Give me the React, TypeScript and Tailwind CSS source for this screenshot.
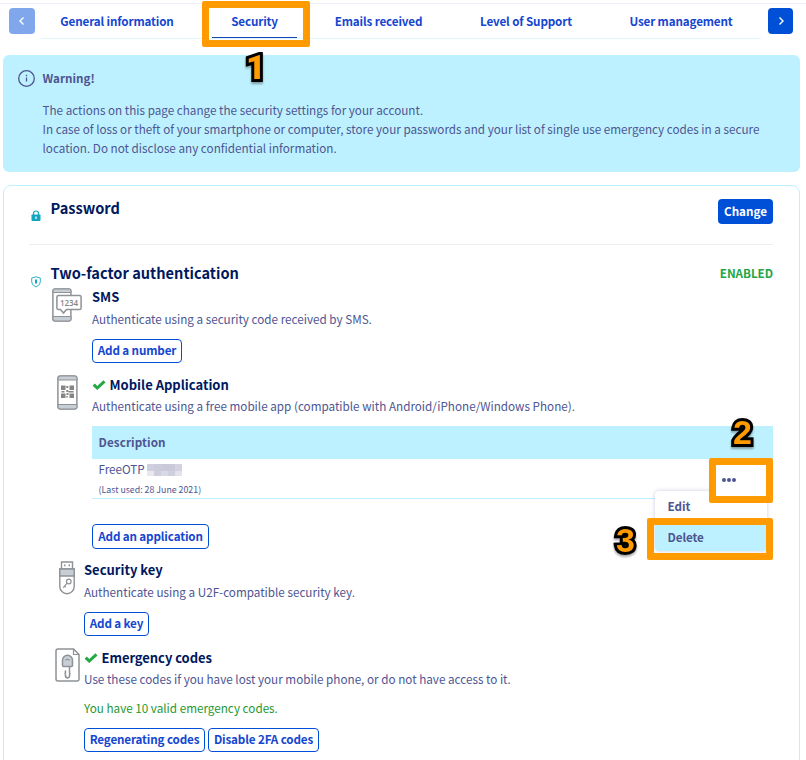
import type { ReactNode } from "react";

function OutlineButton({ className, children }: { className: string; children: ReactNode }) {
  return (
    <button
      className={`flex shrink-0 items-center justify-center whitespace-nowrap rounded-[4px] border border-[#0050d7] bg-white pb-[2px] text-[11.67px] font-bold tracking-[-0.14px] text-[#1546d0] ${className}`}
    >
      {children}
    </button>
  );
}

function Check() {
  return (
    <svg width="14" height="10" viewBox="0 0 14 10" className="shrink-0">
      <path d="M1.7 4.700 5.200 8 12.500 1.300" fill="none" stroke="#22a845" strokeWidth="3" />
    </svg>
  );
}

function SmsIcon() {
  return (
    <svg width="30" height="34" viewBox="0 0 30 34" fill="none" stroke="#8e9296" strokeWidth="1.5">
      <rect x="0.9" y="0.9" width="18" height="32" rx="2" fill="#fff" />
      <path d="M1 4.5V3q0-2 2-2h14q2 0 2 2v1.500ZM1 28.500h18V31q0 2-2 2H3q-2 0-2-2Z" fill="#c8ced5" strokeWidth="1" />
      <path d="M6.500 7.500h21q1.600 0 1.600 1.600v10.800q0 1.600-1.600 1.600H14.500L11.500 25l-3-3.500h-2q-1.600 0-1.600-1.600V9.100q0-1.600 1.600-1.600Z" fill="#fff" />
      <text x="17" y="17.500" textAnchor="middle" fill="#858585" stroke="none" fontSize="8" fontWeight="600" fontFamily="Open Sans, sans-serif" textLength="18">
        1234
      </text>
    </svg>
  );
}

function AppIcon() {
  return (
    <svg width="21" height="35" viewBox="0 0 21 35" fill="none" stroke="#8e9296" strokeWidth="1.5">
      <rect x="0.900" y="0.900" width="19" height="33" rx="2.500" fill="#fff" />
      <path d="M1 5V3.500Q1 1 3.500 1h14Q20 1 20 3.500V5ZM1 29.500h19v2q0 2.500-2.500 2.500h-14Q1 34 1 31.500Z" fill="#c8ced5" strokeWidth="1" />
      <path d="M4 10.500h4.500v4.500H4zM12.500 10.500H17v4.500h-4.500zM4 18.500h4.500V23H4zM12.500 18.500H17V23h-4.500zM9.300 11h2v2h-2zM9.300 15h2v2h-2zM11.500 16h5v1.500h-5zM4.500 16h3v1.500h-3zM9.500 18h2v2h-2zM9.300 21h1.500v1.500H9.300z" fill="#858585" stroke="none" />
    </svg>
  );
}

function UsbIcon() {
  return (
    <svg width="16" height="34" viewBox="0 0 16 34" fill="none" stroke="#8e9296" strokeWidth="1.400">
      <path d="M2.500 8V1h11v7" fill="#fff" />
      <path d="M5 4.300h1.500M9.500 4.300H11" strokeWidth="1.800" />
      <path d="M.8 8h14.400v17.500a7.200 7.200 0 0 1-14.400 0Z" fill="#fff" />
      <path d="M.8 8h14.400v7H.8Z" fill="#c8ced5" />
      <circle cx="9.800" cy="20.500" r="2.300" strokeWidth="1.200" />
      <path d="m8.200 22.200-4 4.400M5.500 25l1.300 1.200" strokeWidth="1.200" />
    </svg>
  );
}

function CodesIcon() {
  return (
    <svg width="25" height="34" viewBox="0 0 25 34" fill="none" stroke="#8e9296" strokeWidth="1.500">
      <path d="M3 .9h15.500L24 6.500V31q0 2-2 2H3q-2 0-2-2V3Q1 .9 3 .9Z" fill="#fff" />
      <path d="M18.500 1v5.500H24" strokeWidth="1.200" />
      <path d="M7.500 17.500v-5.200a5 5 0 0 1 10 0v5.200q0 1-1 1h-8q-1 0-1-1Z" fill="#c8ced5" />
      <path d="M10.500 12.500q2-2.500 4 0" strokeWidth="1.200" />
      <path d="M14.500 19v3.500M11 22.500q-1.200 1-.5 2-1 1 0 2-.5 3 2 3.500 2.500-.5 2-3 1-1.200 0-2.200.7-1.300-.5-2.300" />
    </svg>
  );
}

function StepNumber({ className, children }: { className: string; children: ReactNode }) {
  return (
    <span
      className={`absolute leading-[34px] text-[#ff9a00] drop-shadow-[0_2px_1px_rgba(0,0,0,0.35)] [-webkit-text-stroke:6px_#000] [paint-order:stroke_fill] [stroke-linejoin:round] ${className}`}
    >
      {children}
    </span>
  );
}

const frame = "absolute border-[7px] border-[#ff9a00] rounded-[2px]";
const heading = "flex items-center whitespace-nowrap text-[13px] font-bold text-[#00185e]";
const body = "flex items-center whitespace-nowrap text-[11.7px] text-[#4d5592]";

export default function App() {
  return (
    <div className="relative flex h-[760px] w-[806px] flex-col overflow-hidden bg-white pt-[3px] font-['Noto_Sans_CJK_SC',sans-serif]">
      <nav className="flex h-[52px] shrink-0 items-start border-t border-[#f1f1fb] pl-[9px] pt-[4px]">
        <button className="flex h-[26px] w-[26px] items-center justify-center rounded-[4px] bg-[#80a7eb]">
          <svg width="8" height="10" viewBox="0 0 8 10"><path d="M5.500 1.500 2 5l3.500 3.500" fill="none" stroke="#fff" strokeWidth="1.400" /></svg>
        </button>
        <div className="ml-[6px] flex h-[31px] w-[720px] border-b border-[#dff6fb] text-[11.67px] font-bold tracking-[-0.14px] text-[#1546d0]">
          <div className="flex h-[27px] w-[152px] items-center justify-center whitespace-nowrap pb-[2px]">General information</div>
          <div className="ml-[19px] flex h-[30px] w-[85px] items-center justify-center border-b border-[#1546b0] pb-[4px]">Security</div>
          <div className="flex h-[27px] w-[163px] items-center justify-center whitespace-nowrap pb-[2px]">Emails received</div>
          <div className="flex h-[27px] w-[132px] items-center justify-center whitespace-nowrap pb-[2px]">Level of Support</div>
          <div className="ml-[24px] flex h-[27px] w-[130px] items-center justify-center whitespace-nowrap pb-[2px]">User management</div>
        </div>
        <button className="ml-[7px] flex h-[26px] w-[25px] items-center justify-center rounded-[4px] bg-[#0050d7]">
          <svg width="8" height="10" viewBox="0 0 8 10"><path d="M2.500 1.500 6 5 2.500 8.500" fill="none" stroke="#fff" strokeWidth="1.400" /></svg>
        </button>
      </nav>

      <section className="ml-[3px] h-[117px] w-[797px] shrink-0 rounded-[6px] bg-[#bef1ff] pl-[14px] pt-[14px] text-[#4d5592]">
        <div className="flex h-[18px] items-center">
          <svg width="18" height="18" viewBox="0 0 18 18" fill="none" stroke="#4d5592">
            <circle cx="9.500" cy="9.500" r="7.800" strokeWidth="1.300" />
            <path d="M9.500 8.500v4M9.500 5.800v1.400" strokeWidth="1.300" />
          </svg>
          <strong className="ml-[7.500px] text-[11.67px] leading-[18px]">Warning!</strong>
        </div>
        <p className="ml-[25.500px] mt-[13px] whitespace-nowrap text-[11.7px] leading-[19px]">
          The actions on this page change the security settings for your account.
          <br />
          In case of loss or theft of your smartphone or computer, store your passwords and your list of single use emergency codes in a secure
          <br />
          location. Do not disclose any confidential information.
        </p>
      </section>

      <main className="ml-[3px] mt-[13px] h-[600px] w-[797px] shrink-0 rounded-t-[8px] border border-[#bef1ff] pl-[25px]">
        <div className="flex h-[59px] w-[744px] items-start border-b border-[#ededed]">
          <svg width="10" height="12" viewBox="0 0 10 12" className="ml-[2px] mt-[24px]">
            <path d="M2.500 5V3.500a2.500 2.500 0 0 1 5 0V5" fill="none" stroke="#15a5be" strokeWidth="1.200" />
            <rect x="0.500" y="4.500" width="9" height="6.500" rx="0.800" fill="#15a5be" />
            <path d="M5 6.500v2.500" stroke="#d5f6fb" strokeWidth="1.500" />
          </svg>
          <h2 className="ml-[9.500px] mt-[12px] text-[14.600px] font-bold leading-[20px] text-[#00185e]">Password</h2>
          <button className="ml-auto mt-[13px] flex h-[25px] w-[55px] items-center justify-center rounded-[4px] bg-[#0050d7] pb-[1px] text-[11.67px] font-bold text-white">Change</button>
        </div>

        <div className="flex h-[43px] w-[744px] items-start">
          <svg width="10" height="12" viewBox="0 0 10 12" className="ml-[2px] mt-[31px] shrink-0" fill="none" stroke="#2cb4ca">
            <path d="M5 .8 9.300 2v4q0 3-4.300 5Q.7 9 .7 6V2Z" />
            <path d="M5 3.500v4" stroke="#15a5be" strokeWidth="2" />
          </svg>
          <h2 className="ml-[9.500px] mt-[18px] whitespace-nowrap text-[14.600px] font-bold leading-[20px] text-[#00185e]">Two-factor authentication</h2>
          <span className="ml-auto mt-[19px] text-[11.67px] font-bold leading-[18px] tracking-[-0.05px] text-[#23a647]">ENABLED</span>
        </div>

        <article className="flex h-[87px] w-[744px]">
          <div className="w-[63px] shrink-0 pl-[23px]"><SmsIcon /></div>
          <div>
            <h3 className={`${heading} mt-px h-[16px]`}>SMS</h3>
            <p className={`${body} mt-[5px] h-[18px]`}>Authenticate using a security code received by SMS.</p>
            <OutlineButton className="mt-[11px] h-[24px] w-[90px]">Add a number</OutlineButton>
          </div>
        </article>

        <article className="flex h-[186px] w-[744px]">
          <div className="w-[63px] shrink-0 pl-[27.500px]"><AppIcon /></div>
          <div className="w-[681px] shrink-0">
            <h3 className={`${heading} mt-px h-[18px] gap-[3.500px]`}><Check />Mobile Application</h3>
            <p className={`${body} mt-[3px] h-[18px]`}>Authenticate using a free mobile app (compatible with Android/iPhone/Windows Phone).</p>
            <div className="mt-[11px] h-[33px] bg-[#bef1ff] pl-[6.500px] text-[11.67px] font-bold leading-[31px] tracking-[0.1px] text-[#4d5592]">Description</div>
            <div className="h-[40px] border-b border-[#bef1ff] pl-[6.500px] text-[#4d5592]">
              <div className="flex h-[20px] items-center text-[11.67px]">
                FreeOTP
                <span className="ml-[2.500px] mt-px flex h-[12px] w-[35px] flex-col">
                  <span className="flex h-[7px]">
                    <span className="w-[7px] bg-[#d0cfdf]" />
                    <span className="w-[7px] bg-[#cdccdc]" />
                    <span className="w-[14px] bg-[#cac9da]" />
                    <span className="w-[7px] bg-[#d3d2e1]" />
                  </span>
                  <span className="flex h-[5px]">
                    <span className="w-[7px] bg-[#e8e8ef]" />
                    <span className="w-[7px] bg-[#cfcede]" />
                    <span className="w-[7px] bg-[#d9d8e5]" />
                    <span className="w-[7px] bg-[#d0cfdf]" />
                    <span className="w-[7px] bg-[#e3e3ed]" />
                  </span>
                </span>
              </div>
              <div className="flex h-[18px] items-center pt-[3px] text-[8.800px]">(Last used: 28 June 2021)</div>
            </div>
            <OutlineButton className="mt-[25px] h-[25px] w-[117px]">Add an application</OutlineButton>
          </div>
        </article>

        <article className="flex h-[87px] w-[744px]">
          <div className="w-[55px] shrink-0 pl-[30px]"><UsbIcon /></div>
          <div>
            <h3 className={`${heading} mt-px h-[16px]`}>Security key</h3>
            <p className={`${body} mt-[5px] h-[18px]`}>Authenticate using a U2F-compatible security key.</p>
            <OutlineButton className="mt-[11px] h-[24px] w-[65px]">Add a key</OutlineButton>
          </div>
        </article>

        <article className="flex w-[744px]">
          <div className="w-[55px] shrink-0 pl-[25.500px]"><CodesIcon /></div>
          <div>
            <h3 className={`${heading} mt-px h-[18px] gap-[3.500px] tracking-[-0.06px]`}><Check />Emergency codes</h3>
            <p className={`${body} mt-[3px] h-[18px]`}>Use these codes if you have lost your mobile phone, or do not have access to it.</p>
            <p className="mt-[11px] flex h-[18px] items-center whitespace-nowrap text-[11.7px] text-[#23982f]">You have 10 valid emergency codes.</p>
            <div className="mt-[11px] flex gap-[3px]">
              <OutlineButton className="h-[24px] w-[121px]">Regenerating codes</OutlineButton>
              <OutlineButton className="h-[24px] w-[111px]">Disable 2FA codes</OutlineButton>
            </div>
          </div>
        </article>
      </main>

      <div className="absolute left-[655px] top-[491px] h-[60px] w-[112px] rounded-[4px] bg-white text-[11.67px] font-bold text-[#4d5592] shadow-[0_0_4px_rgba(77,85,146,0.3)]">
        <div className="flex h-[32px] items-center pb-[2px] pl-[12.500px]">Edit</div>
        <div className="flex h-[28px] items-center rounded-b-[4px] bg-[#bef1ff] pb-px pl-[12.500px] tracking-[-0.1px]">Delete</div>
      </div>
      <div className="absolute left-[715px] top-[465px] flex h-[26px] w-[52px] items-center gap-[1px] bg-white pl-[6.500px] pt-[3px]">
        <span className="h-[4px] w-[4px] rounded-full bg-[#4d5592]" />
        <span className="h-[4px] w-[4px] rounded-full bg-[#4d5592]" />
        <span className="h-[4px] w-[4px] rounded-full bg-[#4d5592]" />
      </div>
      <div className={`${frame} left-[202px] top-[1px] h-[46px] w-[108px]`} />
      <div className={`${frame} left-[709px] top-[458px] h-[45px] w-[64px]`} />
      <div className={`${frame} left-[647px] top-[518px] h-[42px] w-[126px]`} />
      <StepNumber className="left-[246px] top-[50px] font-['Roboto',sans-serif] text-[34px] font-black">1</StepNumber>
      <StepNumber className="left-[733px] top-[415px] font-['Liberation_Sans',sans-serif] text-[34px] font-bold">2</StepNumber>
      <StepNumber className="left-[616px] top-[523px] font-['Liberation_Sans',sans-serif] text-[34px] font-bold">3</StepNumber>
    </div>
  );
}
